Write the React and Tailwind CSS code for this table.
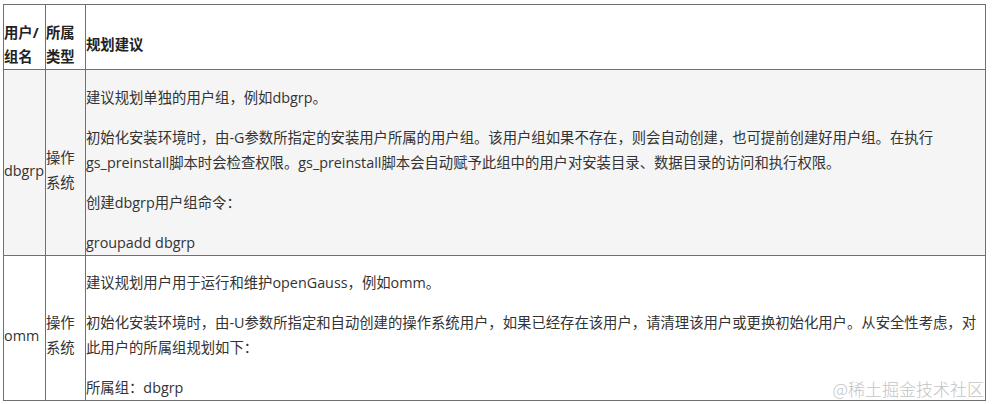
const rows = [
  {
    name: "dbgrp",
    bg: "bg-[#f5f5f5]",
    pad: "pt-[15px]",
    paras: [
      ["建议规划单独的用户组，例如dbgrp。"],
      [
        "初始化安装环境时，由-G参数所指定的安装用户所属的用户组。该用户组如果不存在，则会自动创建，也可提前创建好用户组。在执行",
        "gs_preinstall脚本时会检查权限。gs_preinstall脚本会自动赋予此组中的用户对安装目录、数据目录的访问和执行权限。",
      ],
      ["创建dbgrp用户组命令："],
      ["groupadd dbgrp"],
    ],
  },
  {
    name: "omm",
    bg: "bg-white",
    pad: "pt-[14px]",
    paras: [
      ["建议规划用户用于运行和维护openGauss，例如omm。"],
      [
        "初始化安装环境时，由-U参数所指定和自动创建的操作系统用户，如果已经存在该用户，请清理该用户或更换初始化用户。从安全性考虑，对",
        "此用户的所属组规划如下：",
      ],
      ["所属组：dbgrp"],
    ],
  },
];

export default function App() {
  return (
    <main className="relative h-[404px] w-[992px] overflow-hidden bg-white pl-[3px] pt-[4px] font-['Open_Sans','Noto_Sans_CJK_SC',sans-serif] text-[14.35px] text-[#333]">
      <div className="w-[983px] border-l border-t border-[#707070]">
        <div className="grid grid-cols-[42px_40px_900px] font-bold leading-[24px] text-[#222]">
          <div className="border-b border-r border-[#707070] pt-[16px]">用户/组名</div>
          <div className="border-b border-r border-[#707070] pt-[16px]">所属类型</div>
          <div className="flex items-center border-b border-r border-[#707070] pt-[16px]">规划建议</div>
        </div>

        {rows.map((row) => (
          <div key={row.name} className={`grid grid-cols-[42px_40px_900px] leading-[25px] ${row.bg}`}>
            <div className={`flex items-center border-b border-r border-[#707070] ${row.pad}`}>{row.name}</div>
            <div className={`flex items-center border-b border-r border-[#707070] ${row.pad}`}>操作系统</div>
            <div className={`flex flex-col gap-[15px] overflow-hidden border-b border-r border-[#707070] ${row.pad}`}>
              {row.paras.map((lines) => (
                <p key={lines[0]} className="whitespace-nowrap">
                  {lines.map((line, i) => (
                    <span key={line}>
                      {i > 0 && <br />}
                      {line}
                    </span>
                  ))}
                </p>
              ))}
            </div>
          </div>
        ))}
      </div>

      <span className="absolute bottom-[7px] right-[8px] font-['Noto_Sans_CJK_SC',sans-serif] text-[17px] font-light leading-none text-[#c4c4c4]">
        @稀土掘金技术社区
      </span>
    </main>
  );
}
